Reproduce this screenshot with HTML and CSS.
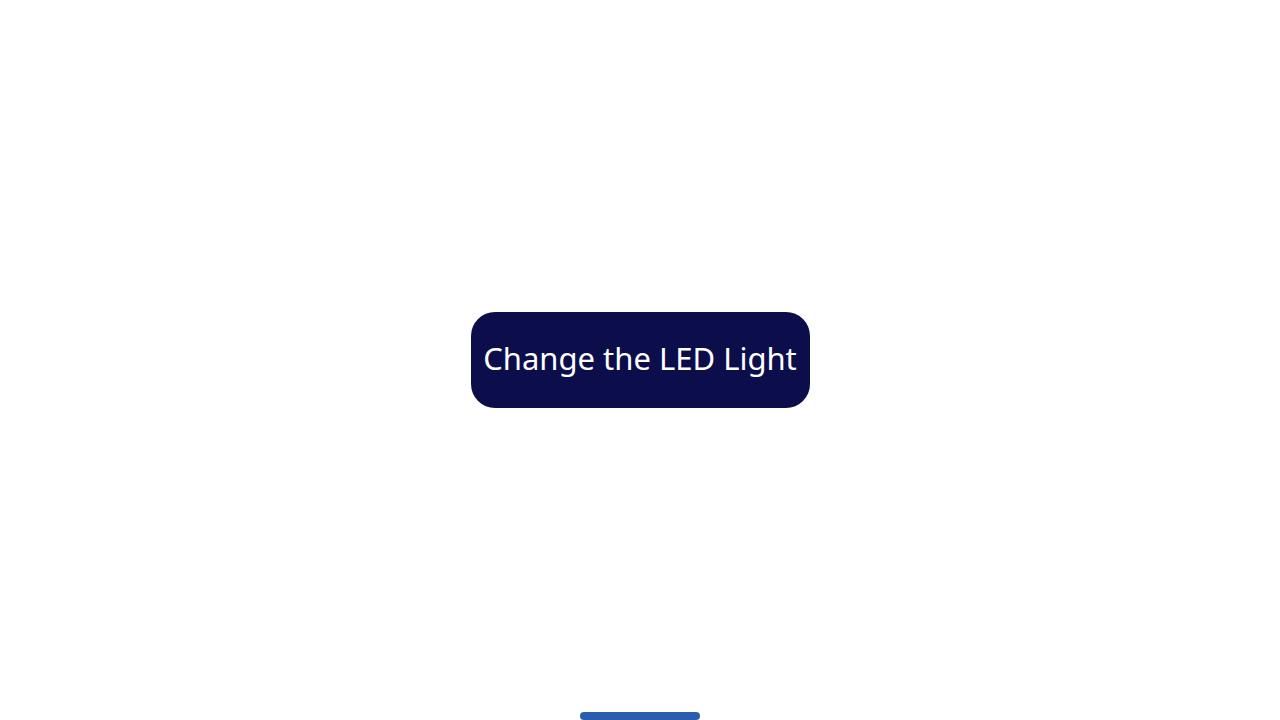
FILE: index.html
```html
<!DOCTYPE html>
<html lang="en">
<head>
<meta charset="utf-8">
<title>LED</title>
<link rel="stylesheet" href="styles.css">
</head>
<body>
<main class="screen">
  <button class="led-button">Change the LED Light</button>
  <div class="home-indicator"></div>
</main>
</body>
</html>
```
FILE: styles.css
```css
html, body {
  margin: 0;
  padding: 0;
  background: #ffffff;
}
.screen {
  position: relative;
  width: 1280px;
  height: 720px;
  display: flex;
  align-items: center;
  justify-content: center;
  overflow: hidden;
}
.led-button {
  width: 339px;
  height: 96px;
  border: none;
  border-radius: 24px;
  background: #0b0e4a;
  color: #ffffff;
  font-family: "Noto Sans", sans-serif;
  font-size: 31px;
  padding: 0 0 4px 0;
  cursor: pointer;
}
.home-indicator {
  position: absolute;
  left: 580px;
  bottom: 0;
  width: 120px;
  height: 8px;
  border-radius: 4px;
  background: #2a5db0;
}
```
